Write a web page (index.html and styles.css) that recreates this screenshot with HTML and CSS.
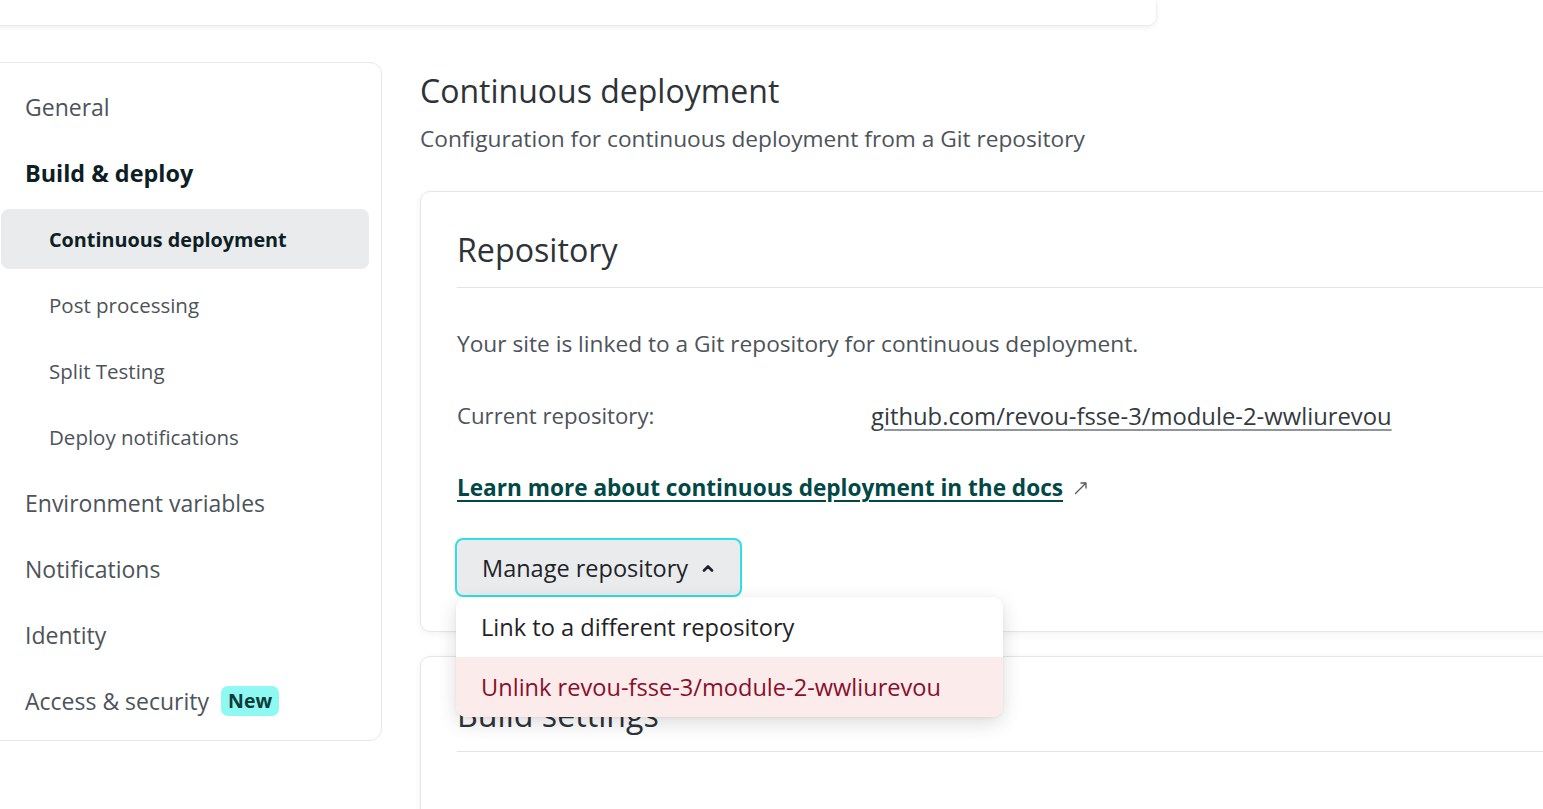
FILE: index.html
```html
<!DOCTYPE html>
<html lang="en">
<head>
<meta charset="utf-8">
<title>Continuous deployment</title>
<link rel="stylesheet" href="styles.css">
</head>
<body>
<div class="topbar"></div>
<div class="layout">
  <nav class="sidebar">
    <a class="nav-item">General</a>
    <a class="nav-item strong">Build &amp; deploy</a>
    <a class="nav-item sub active">Continuous deployment</a>
    <a class="nav-item sub">Post processing</a>
    <a class="nav-item sub">Split Testing</a>
    <a class="nav-item sub">Deploy notifications</a>
    <a class="nav-item">Environment variables</a>
    <a class="nav-item">Notifications</a>
    <a class="nav-item">Identity</a>
    <a class="nav-item">Access &amp; security <span class="badge">New</span></a>
  </nav>
  <main class="content">
    <h1 class="page-title">Continuous deployment</h1>
    <p class="page-sub">Configuration for continuous deployment from a Git repository</p>

    <section class="card">
      <h2 class="card-title">Repository</h2>
      <div class="card-body">
        <p class="text">Your site is linked to a Git repository for continuous deployment.</p>
        <div class="kv">
          <span class="kv-label">Current repository:</span>
          <a class="repo-link">github.com/revou-fsse-3/module-2-wwliurevou</a>
        </div>
        <p class="docs"><a class="docs-link">Learn more about continuous deployment in the docs</a><svg class="ext" width="16" height="16" viewBox="0 0 16 16"><path d="M2.5 13.5 L13 3 M8 3 H13 V8" fill="none" stroke="#545a61" stroke-width="1.3" stroke-linecap="round" stroke-linejoin="round"/></svg></p>
        <div class="menu-wrap">
          <button class="btn">Manage repository
            <svg class="chev" width="12" height="8" viewBox="0 0 12 8"><path d="M2 6.5 L6 2.5 L10 6.5" fill="none" stroke="#1f2328" stroke-width="2.6" stroke-linecap="round" stroke-linejoin="round"/></svg>
          </button>
          <div class="dropdown">
            <div class="dd-item">Link to a different repository</div>
            <div class="dd-item danger">Unlink revou-fsse-3/module-2-wwliurevou</div>
          </div>
        </div>
      </div>
    </section>

    <section class="card second">
      <h2 class="card-title">Build settings</h2>
      <div class="card-body"></div>
    </section>
  </main>
</div>
</body>
</html>
```

FILE: styles.css
```css
* { box-sizing: border-box; }
html, body { margin: 0; padding: 0; }
body {
  background: #fff;
  font-family: "Open Sans", "Noto Sans", "Liberation Sans", sans-serif;
  color: #4d535a;
  overflow: hidden;
  width: 1543px;
  height: 809px;
}
.topbar {
  margin-left: -20px;
  width: 1176px;
  height: 25px;
  background: #fff;
  border-radius: 0 0 8px 8px;
  box-shadow: 0 2px 6px rgba(0,0,0,0.08), 0 0 0 1px rgba(0,0,0,0.03);
}
.layout {
  display: flex;
  align-items: flex-start;
}
.sidebar {
  margin-top: 37px;
  margin-left: -12px;
  width: 394px;
  flex: none;
  border: 1px solid #e8e8e8;
  border-radius: 12px;
  padding: 14px 0 9px;
  display: flex;
  flex-direction: column;
  gap: 6px;
  background: #fff;
}
.nav-item {
  display: flex;
  align-items: center;
  height: 60px;
  margin: 0 12px;
  padding-left: 24px;
  font-size: 23px;
  color: #4d535a;
  border-radius: 8px;
  white-space: nowrap;
}
.nav-item.strong { font-weight: 700; color: #0e1e25; font-size: 23.4px; }
.nav-item.sub { padding-left: 48px; font-size: 20.5px; }
.nav-item.active { background: #e9ebed; color: #0e1e25; font-weight: 700; font-size: 19.8px; }
.badge {
  margin-left: 12px;
  background: #8ef8f2;
  color: #0d3b3a;
  font-weight: 700;
  font-size: 19.5px;
  padding: 0 7px;
  height: 30px;
  line-height: 30px;
  border-radius: 7px;
}
.content {
  margin-left: 38px;
  flex: none;
  width: 1200px;
  padding-top: 46px;
}
.page-title {
  margin: 0;
  font-size: 32px;
  font-weight: 400;
  line-height: 40px;
  color: #2d3338;
}
.page-sub {
  margin: 13px 0 0;
  font-size: 22.7px;
  line-height: 30px;
}
.card {
  margin-top: 37px;
  border: 1px solid #e6e6e6;
  border-radius: 10px;
  background: #fff;
  box-shadow: 0 2px 8px rgba(0,0,0,0.05);
  padding: 38px 0 34px 36px;
}
.card.second { margin-top: 24px; height: 300px; }
.card-title {
  margin: 0;
  font-size: 32.2px;
  font-weight: 400;
  line-height: 40px;
  color: #2d3338;
  padding-bottom: 17px;
  border-bottom: 1px solid #e3e3e3;
}
.card.second .card-title { padding-bottom: 16px; }
.card-body { padding-top: 40px; }
.text { margin: 0; font-size: 22.7px; line-height: 32px; }
.kv { margin-top: 40px; display: flex; font-size: 22.2px; line-height: 32px; }
.kv-label { width: 414px; }
.repo-link {
  font-size: 23.8px;
  color: #333a40;
  text-decoration: underline;
  text-decoration-color: #8f969c;
  text-underline-offset: 4px;
}
.docs { margin: 40px 0 0; font-size: 22.6px; line-height: 32px; display: flex; align-items: center; }
.docs-link {
  color: #014847;
  font-weight: 700;
  text-decoration: underline;
  text-underline-offset: 4px;
}
.ext { margin-left: 10px; }
.menu-wrap { position: relative; margin-top: 34px; }
.btn {
  display: inline-flex;
  align-items: center;
  gap: 14px;
  height: 59px;
  padding: 0 26px 0 25px;
  margin-left: -2px;
  background: #e9ebed;
  border: 2px solid #30e0e0;
  border-radius: 8px;
  font-family: inherit;
  font-size: 23.5px;
  color: #1f2328;
}
.dropdown {
  position: absolute;
  left: -1px;
  top: 59px;
  width: 547px;
  background: #fff;
  border-radius: 10px;
  box-shadow: 0 6px 20px rgba(0,0,0,0.14), 0 1px 3px rgba(0,0,0,0.06);
  overflow: hidden;
  z-index: 5;
}
.dd-item {
  height: 60px;
  display: flex;
  align-items: center;
  padding-left: 25px;
  font-size: 23.6px;
  color: #1f2328;
  white-space: nowrap;
}
.dd-item.danger { background: #fbeceb; color: #8a0f2b; }
```
